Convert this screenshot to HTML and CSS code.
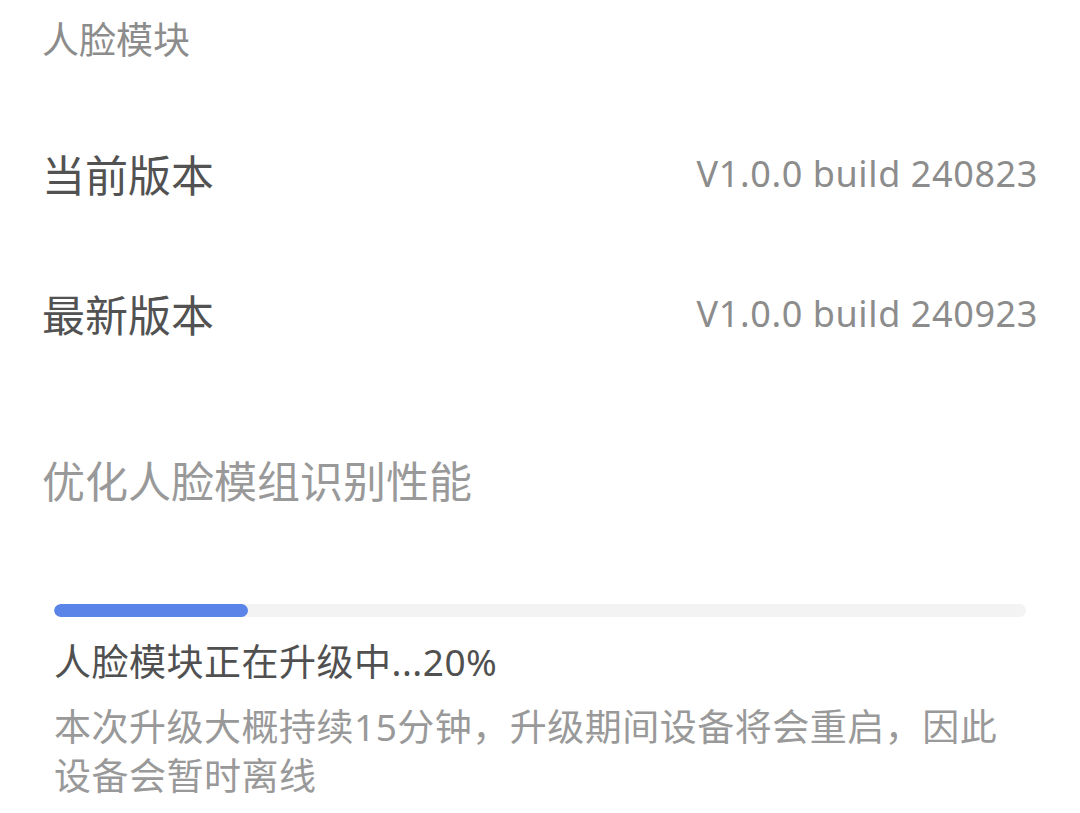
FILE: index.html
```html
<!DOCTYPE html>
<html lang="zh-CN">
<head>
  <meta charset="UTF-8">
  <meta name="viewport" content="width=device-width, initial-scale=1.0">
  <title>人脸模块</title>
  <link rel="stylesheet" href="styles.css">
</head>
<body>
  <main class="page">
    <div class="group-title">人脸模块</div>
    <div class="row">
      <span class="label">当前版本</span>
      <span class="value">V1.0.0 build 240823</span>
    </div>
    <div class="row">
      <span class="label">最新版本</span>
      <span class="value">V1.0.0 build 240923</span>
    </div>
    <p class="changelog">优化人脸模组识别性能</p>
    <section class="upgrade">
      <div class="track"><div class="fill" style="width:20%"></div></div>
      <div class="status">人脸模块正在升级中...20%</div>
      <p class="hint">本次升级大概持续15分钟，升级期间设备将会重启，因此设备会暂时离线</p>
    </section>
  </main>
</body>
</html>
```

FILE: styles.css
```css
* { box-sizing: border-box; margin: 0; padding: 0; }
body {
  background: #fff;
  font-family: "Noto Sans", "Noto Sans CJK SC", sans-serif;
}
.page { padding: 0 42px; }
.group-title {
  height: 80px; line-height: 80px;
  font-size: 37px; color: #8c8c8c;
  margin-bottom: 23px;
}
.row {
  height: 140px;
  display: flex; align-items: center; justify-content: space-between;
}
.label { font-size: 43px; color: #525252; }
.value { font-size: 36px; color: #8c8c8c; letter-spacing: 0.6px; }
.changelog {
  margin-top: 74px;
  line-height: 50px;
  font-size: 43px; color: #999;
}
.upgrade { padding: 0 12px; margin-top: 97px; }
.track {
  height: 13px; border-radius: 7px;
  background: #f3f3f3; overflow: hidden;
}
.fill { height: 100%; border-radius: 7px; background: #5b84e8; }
.status {
  margin-top: 21px;
  line-height: 48px;
  font-size: 37px; color: #505050;
  letter-spacing: 0.5px;
}
.hint {
  margin-top: 16px;
  padding-right: 10px;
  line-height: 49px;
  font-size: 37px; color: #999;
  letter-spacing: 0.5px;
}
```
